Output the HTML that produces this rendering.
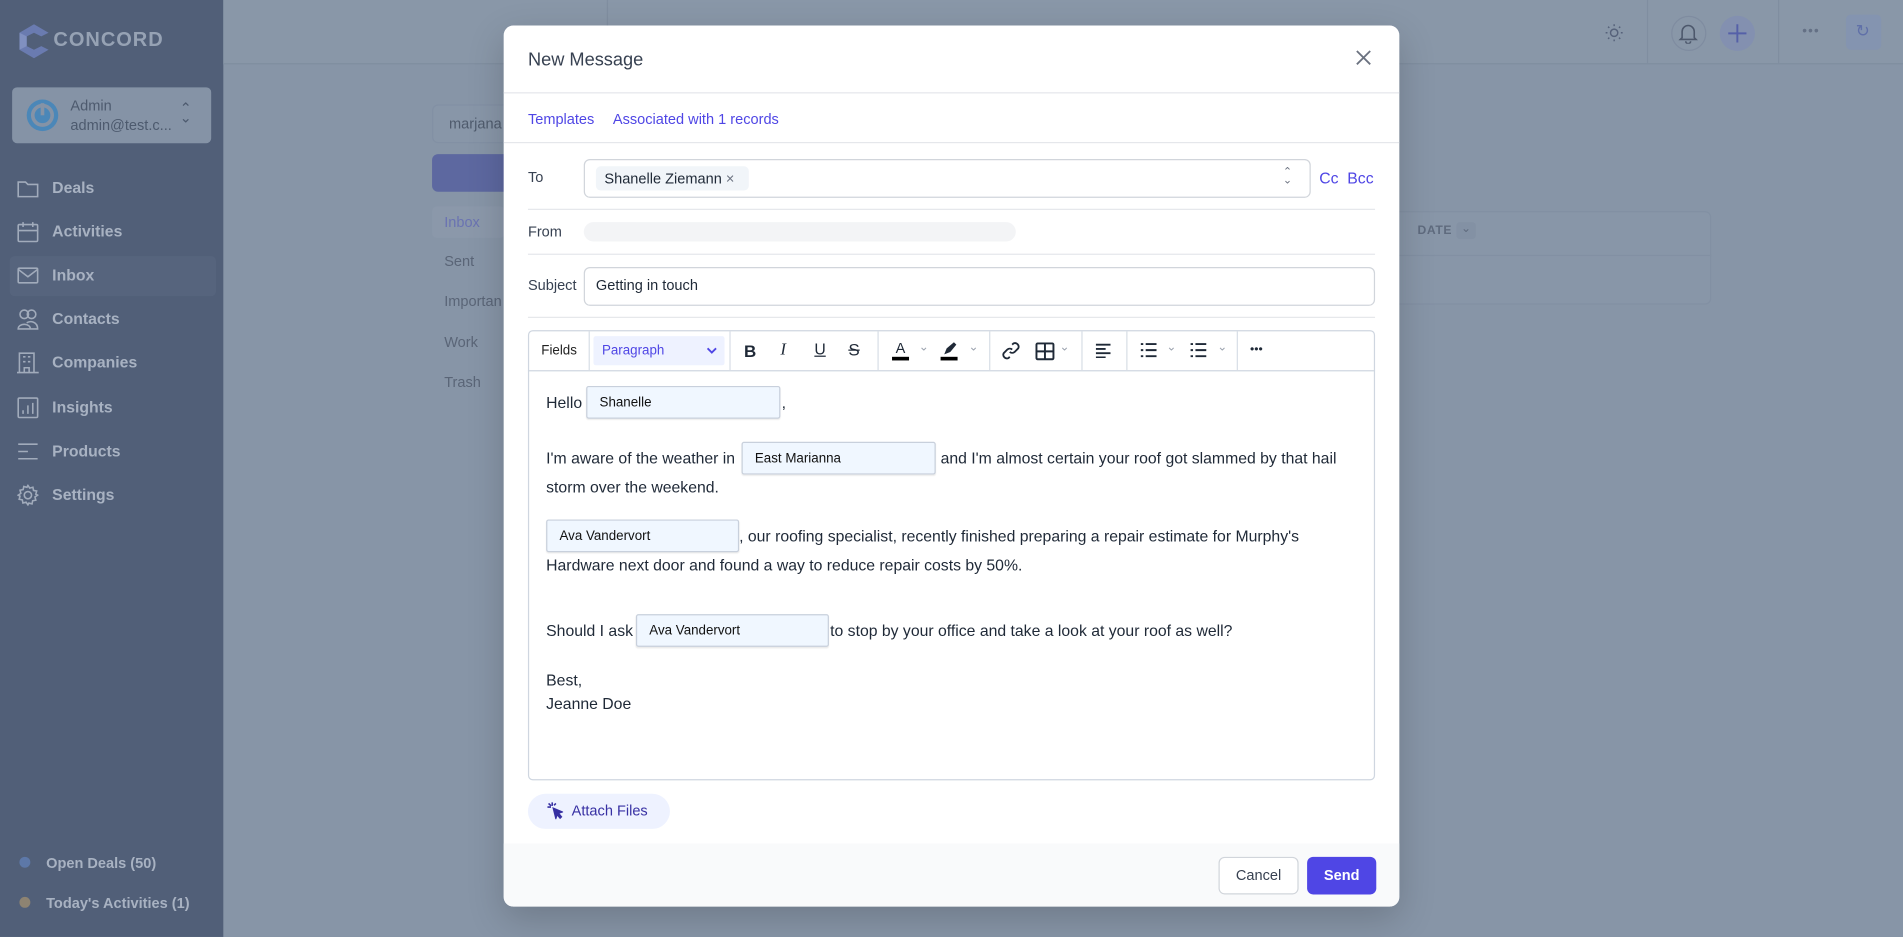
<!DOCTYPE html>
<html><head><meta charset="utf-8"><style>
*{box-sizing:border-box;margin:0;padding:0}
html,body{width:1903px;height:937px;overflow:hidden;background:#8795a7}
#s{position:absolute;left:0;top:0;width:1568px;height:772px;transform:scale(1.21365);transform-origin:0 0;font-family:"Liberation Sans",sans-serif;background:#8795a7}
.a{position:absolute}
.nav{position:absolute;left:43px;font-size:13px;font-weight:bold;color:#a8b2c2;line-height:16px}
.ic{position:absolute;left:14px}
.m{color:#5a6577;font-size:13px;position:absolute;left:366px}
.lbl{position:absolute;left:435px;font-size:13px;color:#374151}
.hr{position:absolute;left:435px;width:698px;height:1px;background:#e5e7eb}
.fld{display:inline-block;position:absolute;height:27px;background:#f0f7ff;border:1px solid #c8d0dc;border-radius:2px;font-size:11px;color:#111;padding:7px 10px;box-shadow:0 1px 1px rgba(0,0,0,.08)}
.tx{position:absolute;left:450px;font-size:13px;color:#1f2937;white-space:nowrap}
.tb{position:absolute;top:273px;width:1px;height:32px;background:#d8dee6}
</style></head><body><div id="s">
<!-- sidebar -->
<div class="a" style="left:0;top:0;width:184px;height:772px;background:#515f78"></div>
<svg class="a" style="left:16px;top:20px" width="24" height="28" viewBox="0 0 24 28"><path d="M12 0 L24 7 L18 10 L12 7 L6 10 L6 18 L12 21 L18 18 L24 21 L12 28 L0 21 L0 7Z" fill="#6a7bb0"/><path d="M0 7 L6 10 L6 18 L0 21Z" fill="#8090c0"/></svg>
<div class="a" style="left:44px;top:24px;font-size:16.5px;font-weight:bold;color:#96a2b4;letter-spacing:.8px">CONCORD</div>
<div class="a" style="left:10px;top:72px;width:164px;height:46px;background:#8593a6;border-radius:4px"></div>
<svg class="a" style="left:21px;top:81px" width="28" height="28" viewBox="0 0 28 28"><circle cx="14" cy="14" r="13" fill="#4b87b8"/><circle cx="14" cy="14" r="8" fill="none" stroke="#8593a6" stroke-width="3"/><rect x="12.5" y="4" width="3" height="10" fill="#8593a6"/></svg>
<div class="a" style="left:58px;top:80px;font-size:12px;color:#4d5a6e">Admin</div>
<div class="a" style="left:58px;top:96px;font-size:12px;color:#4d5a6e">admin@test.c...</div>
<div class="a" style="left:148px;top:85px;font-size:12px;color:#4d5a6e;line-height:8px">&#8963;<br>&#8964;</div>
<div class="a" style="left:8px;top:211px;width:170px;height:33px;background:#56647d;border-radius:4px"></div>
<svg class="ic" style="top:147px" width="18" height="16" viewBox="0 0 18 16" fill="none" stroke="#a1abbb" stroke-width="1.3"><path d="M1 3 h6 l2 2 h8 v10 h-16z"/></svg>
<svg class="ic" style="top:182px" width="18" height="18" viewBox="0 0 18 18" fill="none" stroke="#a1abbb" stroke-width="1.3"><rect x="1" y="3" width="16" height="14" rx="1"/><path d="M1 8h16M5 1v4M13 1v4"/></svg>
<svg class="ic" style="top:220px" width="18" height="14" viewBox="0 0 18 14" fill="none" stroke="#a1abbb" stroke-width="1.3"><rect x="1" y="1" width="16" height="12" rx="1"/><path d="M1 2l8 6 8-6"/></svg>
<svg class="ic" style="top:254px" width="18" height="18" viewBox="0 0 18 18" fill="none" stroke="#a1abbb" stroke-width="1.3"><circle cx="6" cy="5" r="3.5"/><circle cx="12" cy="5" r="3.5"/><path d="M1 17c0-5 10-5 10 0zM8 12c3-2 9-1 9 5h-6"/></svg>
<svg class="ic" style="top:290px" width="18" height="18" viewBox="0 0 18 18" fill="none" stroke="#a1abbb" stroke-width="1.3"><path d="M2 17V1h12v16M0 17h18M5 4h2M9 4h2M5 8h2M9 8h2M6 17v-4h4v4"/></svg>
<svg class="ic" style="top:327px" width="18" height="18" viewBox="0 0 18 18" fill="none" stroke="#a1abbb" stroke-width="1.3"><rect x="1" y="1" width="16" height="16" rx="1"/><path d="M5 14v-3M9 14V7M13 14V5"/></svg>
<svg class="ic" style="top:364px" width="18" height="16" viewBox="0 0 18 16" fill="none" stroke="#a1abbb" stroke-width="1.3"><path d="M1 2h16M1 8h8M1 14h16"/></svg>
<svg class="ic" style="top:399px" width="18" height="18" viewBox="0 0 18 18" fill="none" stroke="#a1abbb" stroke-width="1.3"><circle cx="9" cy="9" r="3"/><path d="M9 1l1.5 2.2 2.6-.7.5 2.6 2.6.5-.7 2.6L17 9l-2.2 1.5.7 2.6-2.6.5-.5 2.6-2.6-.7L9 17l-1.5-2.2-2.6.7-.5-2.6-2.6-.5.7-2.6L1 9l2.2-1.5-.7-2.6 2.6-.5.5-2.6 2.6.7z"/></svg>
<div class="nav" style="top:147px">Deals</div>
<div class="nav" style="top:183px">Activities</div>
<div class="nav" style="top:219px">Inbox</div>
<div class="nav" style="top:255px">Contacts</div>
<div class="nav" style="top:291px">Companies</div>
<div class="nav" style="top:328px">Insights</div>
<div class="nav" style="top:364px">Products</div>
<div class="nav" style="top:400px">Settings</div>
<div class="a" style="left:16px;top:706px;width:9px;height:9px;border-radius:50%;background:#5d78a8"></div>
<div class="a" style="left:16px;top:739px;width:9px;height:9px;border-radius:50%;background:#8d8372"></div>
<div class="nav" style="left:38px;top:703px;font-size:12px">Open Deals (50)</div>
<div class="nav" style="left:38px;top:736px;font-size:12px">Today's Activities (1)</div>
<!-- topbar -->
<div class="a" style="left:184px;top:0;width:1384px;height:53px;background:#8997a8;border-bottom:1px solid #808ea0"></div>
<div class="a" style="left:500px;top:0;width:1px;height:53px;background:#808ea0"></div>
<div class="a" style="left:1357px;top:0;width:1px;height:53px;background:#808ea0"></div>
<div class="a" style="left:1465px;top:0;width:1px;height:53px;background:#808ea0"></div>
<svg class="a" style="left:1322px;top:19px" width="16" height="16" viewBox="0 0 16 16" fill="none" stroke="#56627a" stroke-width="1.2"><circle cx="8" cy="8" r="3"/><path d="M8 1v1.5M8 13.5V15M1 8h1.5M13.5 8H15M3 3l1 1M12 12l1 1M3 13l1-1M12 4l1-1"/></svg>
<div class="a" style="left:1377px;top:13px;width:29px;height:29px;border-radius:50%;border:1px solid #7f8ca0"></div>
<svg class="a" style="left:1383px;top:18px" width="16" height="18" viewBox="0 0 16 18" fill="none" stroke="#4d586c" stroke-width="1.3"><path d="M3 13V8a5 5 0 0110 0v5l1.5 1.5h-13zM6 16a2 2 0 004 0"/></svg>
<div class="a" style="left:1417px;top:13px;width:29px;height:29px;border-radius:50%;background:#8390b0"></div>
<svg class="a" style="left:1423px;top:19px" width="17" height="17" viewBox="0 0 17 17" stroke="#5560a8" stroke-width="1.6"><path d="M8.5 1v15M1 8.5h15"/></svg>
<div class="a" style="left:1485px;top:20px;font-size:11px;color:#647085;letter-spacing:1px">•••</div>
<div class="a" style="left:1521px;top:12px;width:29px;height:29px;border-radius:4px;background:#8494b0"></div>
<div class="a" style="left:1529px;top:17px;font-size:14px;color:#6070a8">&#8635;</div>
<!-- background inbox -->
<div class="a" style="left:356px;top:86px;width:70px;height:32px;border:1px solid #8290a4;border-radius:5px;background:#8896a8"></div>
<div class="a" style="left:370px;top:95px;font-size:12px;color:#4f5b6d">marjana</div>
<div class="a" style="left:356px;top:127px;width:70px;height:31px;border-radius:5px;background:#5d68a0"></div>
<div class="a" style="left:356px;top:170px;width:60px;height:26px;border-radius:4px;background:#8b98aa"></div>
<div class="m" style="top:176px;color:#6a73b2;font-size:12px">Inbox</div>
<div class="m" style="top:208px;font-size:12px">Sent</div>
<div class="m" style="top:241px;font-size:12px">Importan</div>
<div class="m" style="top:275px;font-size:12px">Work</div>
<div class="m" style="top:308px;font-size:12px">Trash</div>
<div class="a" style="left:1140px;top:174px;width:270px;height:77px;border-radius:5px;background:#8896a8;border:1px solid #8290a3"></div>
<div class="a" style="left:1140px;top:210px;width:270px;height:1px;background:#8290a3"></div>
<div class="a" style="left:1168px;top:185px;font-size:10px;font-weight:bold;color:#5f6b7e;letter-spacing:.5px">DATE</div>
<div class="a" style="left:1200px;top:183px;width:16px;height:14px;border-radius:3px;background:#8391a4;font-size:10px;color:#5f6b7e;text-align:center">&#8964;</div>
<!-- modal -->
<div class="a" style="left:415px;top:21px;width:738px;height:726px;background:#fff;border-radius:8px;box-shadow:0 10px 30px rgba(0,0,0,.18);overflow:hidden">
<div class="a" style="left:0;top:674px;width:738px;height:52px;background:#f9fafb"></div>
</div>
<div class="a" style="left:435px;top:41px;font-size:15px;color:#374151">New Message</div>
<svg class="a" style="left:1117px;top:41px" width="13" height="13" viewBox="0 0 13 13" stroke="#6b7280" stroke-width="1.5"><path d="M1 1l11 11M12 1L1 12"/></svg>
<div class="a" style="left:415px;top:76px;width:738px;height:1px;background:#e5e7eb"></div>
<div class="a" style="left:435px;top:91px;font-size:12px;color:#4f46e5">Templates</div>
<div class="a" style="left:505px;top:91px;font-size:12px;color:#4f46e5">Associated with 1 records</div>
<div class="a" style="left:415px;top:117px;width:738px;height:1px;background:#e5e7eb"></div>
<div class="lbl" style="top:139px;font-size:12px">To</div>
<div class="a" style="left:481px;top:131px;width:599px;height:32px;border:1px solid #d1d5db;border-radius:5px"></div>
<div class="a" style="left:491px;top:137px;width:126px;height:20px;background:#f1f5f9;border-radius:4px"></div>
<div class="a" style="left:498px;top:140px;font-size:12px;color:#1f2937">Shanelle Ziemann <span style="color:#6b7280">&#215;</span></div>
<div class="a" style="left:1057px;top:138px;font-size:9px;color:#6b7280;line-height:7px">&#8963;<br>&#8964;</div>
<div class="a" style="left:1087px;top:139px;font-size:13px;color:#4f46e5">Cc&nbsp; Bcc</div>
<div class="hr" style="top:172px"></div>
<div class="lbl" style="top:184px;font-size:12px">From</div>
<div class="a" style="left:481px;top:183px;width:356px;height:16px;background:#f3f4f6;border-radius:8px"></div>
<div class="hr" style="top:209px"></div>
<div class="lbl" style="top:228px;font-size:12px">Subject</div>
<div class="a" style="left:481px;top:220px;width:652px;height:32px;border:1px solid #d1d5db;border-radius:5px"></div>
<div class="a" style="left:491px;top:228px;font-size:12px;color:#1f2937">Getting in touch</div>
<div class="hr" style="top:261px"></div>
<!-- editor -->
<div class="a" style="left:435px;top:272px;width:698px;height:371px;border:1px solid #cfd6e0;border-radius:4px"></div>
<div class="a" style="left:435px;top:305px;width:698px;height:1px;background:#cfd6e0"></div>
<div class="a" style="left:446px;top:283px;font-size:11px;color:#222">Fields</div>
<div class="tb" style="left:485px"></div>
<div class="a" style="left:489px;top:277px;width:108px;height:24px;background:#eef2ff;border-radius:2px"></div>
<div class="a" style="left:496px;top:283px;font-size:11px;color:#4f46e5">Paragraph</div>
<svg class="a" style="left:582px;top:286px" width="9" height="6" viewBox="0 0 9 6" fill="none" stroke="#4f46e5" stroke-width="1.5"><path d="M1 1l3.5 3.5L8 1"/></svg>
<div class="tb" style="left:601px"></div>
<div class="a" style="left:613px;top:281px;font-size:14px;font-weight:bold;color:#1f2937">B</div>
<div class="a" style="left:643px;top:281px;font-size:14px;font-style:italic;font-family:'Liberation Serif',serif;color:#1f2937">I</div>
<div class="a" style="left:671px;top:280px;font-size:13px;text-decoration:underline;color:#1f2937">U</div>
<div class="a" style="left:699px;top:280px;font-size:14px;text-decoration:line-through;color:#1f2937">S</div>
<div class="tb" style="left:723px"></div>
<div class="a" style="left:735px;top:281px;font-size:12px;color:#1f2937;border-bottom:3px solid #000;width:14px;text-align:center;line-height:13px">A</div>
<div class="a" style="left:757px;top:281px;font-size:10px;color:#9ca3af">&#8964;</div>
<svg class="a" style="left:774px;top:281px" width="16" height="17" viewBox="0 0 16 17"><path d="M4 11l2-5 6-5 2 2-5 6z" fill="#1f2937"/><rect x="1" y="13" width="14" height="3" fill="#000"/></svg>
<div class="a" style="left:798px;top:281px;font-size:10px;color:#9ca3af">&#8964;</div>
<div class="tb" style="left:815px"></div>
<svg class="a" style="left:825px;top:281px" width="16" height="16" viewBox="0 0 16 16" fill="none" stroke="#1f2937" stroke-width="1.5"><path d="M7 9a3 3 0 004 0l3-3a3 3 0 00-4-4l-1 1M9 7a3 3 0 00-4 0l-3 3a3 3 0 004 4l1-1"/></svg>
<svg class="a" style="left:853px;top:282px" width="16" height="15" viewBox="0 0 16 15" fill="none" stroke="#1f2937" stroke-width="1.6"><rect x="1" y="1" width="14" height="13" rx="1"/><path d="M1 7.5h14M8 1v13"/></svg>
<div class="a" style="left:873px;top:281px;font-size:10px;color:#9ca3af">&#8964;</div>
<div class="tb" style="left:891px"></div>
<svg class="a" style="left:902px;top:283px" width="14" height="12" viewBox="0 0 14 12" stroke="#1f2937" stroke-width="1.6"><path d="M1 1h12M1 4.5h8M1 8h12M1 11.5h8"/></svg>
<div class="tb" style="left:928px"></div>
<svg class="a" style="left:939px;top:282px" width="14" height="13" viewBox="0 0 14 13" stroke="#1f2937" stroke-width="1.6"><path d="M1 1.5h2M1 6.5h2M1 11.5h2M5 1.5h9M5 6.5h9M5 11.5h9"/></svg>
<div class="a" style="left:961px;top:281px;font-size:10px;color:#9ca3af">&#8964;</div>
<svg class="a" style="left:980px;top:282px" width="14" height="13" viewBox="0 0 14 13" stroke="#1f2937" stroke-width="1.6"><path d="M1 1.5h2M1 6.5h2M1 11.5h2M5 1.5h9M5 6.5h9M5 11.5h9"/></svg>
<div class="a" style="left:1003px;top:281px;font-size:10px;color:#9ca3af">&#8964;</div>
<div class="tb" style="left:1019px"></div>
<div class="a" style="left:1030px;top:283px;font-size:10px;color:#1f2937">•••</div>
<!-- body -->
<div class="tx" style="top:324px">Hello</div>
<div class="fld" style="left:483px;top:318px;width:160px">Shanelle</div>
<div class="tx" style="left:644px;top:324px">,</div>
<div class="tx" style="top:370px">I'm aware of the weather in</div>
<div class="fld" style="left:611px;top:364px;width:160px">East Marianna</div>
<div class="tx" style="left:775px;top:370px">and I'm almost certain your roof got slammed by that hail</div>
<div class="tx" style="top:394px">storm over the weekend.</div>
<div class="fld" style="left:450px;top:428px;width:159px">Ava Vandervort</div>
<div class="tx" style="left:609px;top:434px">, our roofing specialist, recently finished preparing a repair estimate for Murphy's</div>
<div class="tx" style="top:458px">Hardware next door and found a way to reduce repair costs by 50%.</div>
<div class="tx" style="top:512px">Should I ask</div>
<div class="fld" style="left:524px;top:506px;width:159px">Ava Vandervort</div>
<div class="tx" style="left:684px;top:512px">to stop by your office and take a look at your roof as well?</div>
<div class="tx" style="top:553px">Best,</div>
<div class="tx" style="top:572px">Jeanne Doe</div>
<!-- attach -->
<div class="a" style="left:435px;top:654px;width:117px;height:29px;border-radius:15px;background:#eef2ff"></div>
<svg class="a" style="left:451px;top:661px" width="13" height="14" viewBox="0 0 13 14" fill="none" stroke="#3730a3" stroke-width="1.3"><path d="M4 0v3M0 4h3M1 1l2 2M7 1L5.5 2.5"/><path d="M5 5l7 3-3 1 2.5 3-1 1-2.5-3-1 3z" fill="#3730a3"/></svg>
<div class="a" style="left:471px;top:661px;font-size:12px;color:#3730a3">Attach Files</div>
<div class="a" style="left:1004px;top:706px;width:66px;height:31px;border:1px solid #d1d5db;border-radius:5px;background:#fff;font-size:12px;color:#374151;text-align:center;line-height:29px">Cancel</div>
<div class="a" style="left:1077px;top:706px;width:57px;height:31px;border-radius:5px;background:#4f46e5;font-size:12px;font-weight:bold;color:#fff;text-align:center;line-height:31px">Send</div>
</div></body></html>
